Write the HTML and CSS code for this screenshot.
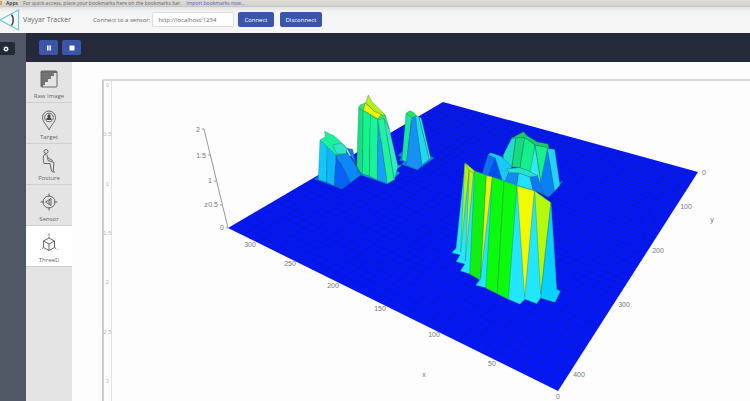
FILE: index.html
```
<!DOCTYPE html>
<html lang="en">
<head>
  <meta charset="utf-8" />
  <title>Vayyar Tracker</title>
  <link rel="stylesheet" href="styles.css">
</head>
<body>
  <div class="bookmarks">
    <span class="apps-icon"></span>
    <span class="apps">Apps</span>
    <span>For quick access, place your bookmarks here on the bookmarks bar.</span>
    <a href="#">Import bookmarks now...</a>
  </div>

  <header class="header">
    <svg class="logo" viewBox="0 0 20 22" fill="none">
      <path d="M18.500 1V21L0 11Z" stroke="#6fcbd6" stroke-width="1.200" />
      <path d="M11.500 5.500Q15 11 11.500 16.500" stroke="#3c4350" stroke-width="1.500" />
    </svg>
    <span class="title">Vayyar Tracker</span>
    <label for="sensor">Connect to a sensor:</label>
    <input id="sensor" class="sensor" type="text" value="http://localhost:1234">
    <button class="button" type="button">Connect</button>
    <button class="button" type="button">Disconnect</button>
  </header>

  <div class="app">
    <div class="rail">
      <button class="settings" type="button" aria-label="Settings">
        <svg viewBox="0 0 10 10" fill="none" stroke="#fff">
          <circle cx="5" cy="5" r="2" stroke-width="1.500" />
          <circle cx="5" cy="5" r="2.900" stroke-width="1" stroke-dasharray="1.200 1.080" />
        </svg>
      </button>
    </div>

    <div class="content">
      <div class="toolbar">
        <button class="button icon-button" type="button" aria-label="Pause">
          <svg viewBox="0 0 6 6" fill="#fff"><path d="M1 .5h1.600v5H1zM3.400 .5H5v5H3.400z" /></svg>
        </button>
        <button class="button icon-button" type="button" aria-label="Stop">
          <svg viewBox="0 0 6 6" fill="#fff"><path d="M.5 .5h5v5h-5z" /></svg>
        </button>
      </div>

      <div class="workspace">
        <nav class="views">
          <button class="view" type="button">
            <svg viewBox="0 0 24 24">
              <path fill="#666" stroke="none" d="M4 4H20V6H17V9H14V12H11V15H8V18H6V20H4Z" />
              <path stroke="#999" stroke-width=".4" d="M7 4V18M10 4V15M13 4V12M16 4V9M4 7H17M4 10H14M4 13H11M4 16H8" />
              <rect x="4" y="4" width="16" height="16" rx="1" />
            </svg>
            Raw Image
          </button>
          <button class="view" type="button">
            <svg viewBox="0 0 24 24">
              <path d="M12 22C10 17 5.500 14 5.500 9.500a6.500 6.500 0 0 1 13 0C18.500 14 14 17 12 22Z" />
              <circle cx="12" cy="9.500" r="4.300" />
              <path fill="#444" stroke="none" d="M9.300 12C9.300 10 10.600 9.600 11.200 9.300A1.600 1.600 0 1 1 12.800 9.300C13.400 9.600 14.700 10 14.700 12Z" />
            </svg>
            Target
          </button>
          <button class="view" type="button">
            <svg viewBox="0 0 24 24">
              <circle cx="9" cy="2.500" r="2" />
              <path d="M7.500 5.500C6 7 6 11 7 14.500H13L14.500 22L16 23L17 13.500L11 11.500L10.500 7Q9.500 5 7.500 5.500ZM10.500 8.500L15.500 11.500L15 12.500M16 23H18" />
            </svg>
            Posture
          </button>
          <button class="view" type="button">
            <svg viewBox="0 0 24 24">
              <circle cx="12" cy="12" r="6" />
              <path d="M12 3.500V7M12 17V20.500M3.500 12H7M17 12H20.500M8.500 12L14 8.500V15.500ZM12.500 10Q11 12 12.500 14" />
            </svg>
            Sensor
          </button>
          <button class="view active" type="button">
            <svg viewBox="0 0 24 24">
              <path d="M12 7L17.500 10V16.500L12 19.500L6.500 16.500V10ZM6.500 10L12 13L17.500 10M12 13V19.500" />
              <path d="M12 2.500V7M6.500 16.500L3.500 18.500M17.500 16.500L20.500 18.500" stroke-dasharray="2 1" />
            </svg>
            ThreeD
          </button>
        </nav>

        <main class="stage">
          <div class="panel">
            <div class="ruler">
              <span>0</span>
              <span>0.5</span>
              <span>1</span>
              <span>1.5</span>
              <span>2</span>
              <span>2.5</span>
              <span>3</span>
            </div>

            <svg class="plot" viewBox="112 81 638 320" preserveAspectRatio="xMinYMin meet">
              <polygon class="floor" points="228,228 443,102 698,172 558,391" />
              <path id="grid" class="grid" />

              <path class="axis" d="M204 129L228 228M202 129H204M208 155H210M214 181H216M220 205H222M226 228H228" />

              <!-- three peaks at the far left, model units are 1/3 px -->
              <g class="mesh" transform="translate(300 85) scale(.3333)">
                <!-- right one -->
                <polygon fill="#1478f5" points="304,202 294,212 304,216 298,226 312,230 304,238 352,255 404,218 386,212" />
                <polygon fill="#19e6a0" points="318,85 335,98 320,232 306,224" />
                <polygon fill="#1590f5" points="336,96 348,93 366,240 352,254 318,240" />
                <polygon fill="#23d8ee" points="346,92 357,95 388,223 366,240" />
                <polygon fill="#30eed8" points="357,95 364,100 392,220 388,223" />
                <polygon fill="#1ce65a" points="318,85 330,77 342,83 350,93 335,98" />
                <!-- middle one -->
                <polygon fill="#1896f5" points="284,240 306,240 288,256 300,264 262,297 176,268 172,250" />
                <polygon fill="#16df80" points="176,68 190,75 187,266 170,256" />
                <polygon fill="#12f58c" points="190,75 212,80 208,273 187,266" />
                <polygon fill="#18f596" points="212,80 234,100 232,284 208,273" />
                <polygon fill="#12a4fa" points="234,104 262,296 232,284" />
                <polygon fill="#20f3a0" points="234,104 252,98 283,284 262,296" />
                <polygon fill="#2fecc0" points="252,98 268,132 294,244 283,284" />
                <polygon fill="#2bea70" points="176,68 180,60 196,54 230,72 256,90 268,132 252,100 234,104 190,76" />
                <polygon fill="#f2f000" points="190,76 196,54 222,78 246,84 234,102" />
                <polygon fill="#b9ee14" points="197,54 205,30 216,50 250,84 256,94 222,78" />
                <!-- left one -->
                <polygon fill="#0a70f5" points="56,272 43,282 126,312 186,268" />
                <polygon fill="#12c8fb" points="60,165 82,178 80,292 55,284" />
                <polygon fill="#0cb6ff" points="82,178 108,208 103,302 80,292" />
                <polygon fill="#0860f5" points="108,208 152,292 128,310 103,302" />
                <polygon fill="#0c88fa" points="108,208 140,198 184,268 152,292" />
                <polygon fill="#0f7af0" points="140,190 158,193 174,264 184,268" />
                <polygon fill="#1cf09c" points="60,165 76,155 74,139 104,154 140,188 138,206 108,210 82,186" />
                <polygon fill="#2ee6c8" points="98,180 124,174 140,190 138,206 110,206" />
              </g>

              <!-- right hand side peaks -->
              <g class="mesh" transform="translate(440 120) scale(.3333)">
                <!-- back -->
                <polygon fill="#1878f5" points="300,190 354,188 369,184 326,231 296,216" />
                <polygon fill="#20dcc8" points="190,104 215,55 228,52 216,140 188,130" />
                <polygon fill="#14dc78" points="228,52 254,52 240,144 216,140" />
                <polygon fill="#14f08c" points="254,52 285,75 274,156 240,144" />
                <polygon fill="#30e8f0" points="285,75 304,192 296,206 270,158" />
                <polygon fill="#18f08c" points="285,75 326,82 304,192" />
                <polygon fill="#0a80f5" points="322,86 344,214 326,230 296,216" />
                <polygon fill="#20d4f5" points="322,86 344,88 360,196 344,214" />
                <polygon fill="#14d060" points="215,55 250,35 262,48 292,66 324,72 327,84 286,75 254,53 228,53" />
                <!-- middle -->
                <polygon fill="#0a70f5" points="144,104 166,114 190,185 126,164" />
                <polygon fill="#0050f0" points="166,114 188,184 142,170" />
                <polygon fill="#18c8fa" points="144,104 152,98 182,108 216,140 206,160 196,186 188,184 166,114" />
                <polygon fill="#1488f5" points="208,155 236,158 230,198 194,186" />
                <polygon fill="#20e2ff" points="236,158 270,170 280,212 230,198" />
                <polygon fill="#1078f5" points="270,170 292,166 312,222 280,212" />
                <polygon fill="#24e2d0" points="200,146 240,143 266,152 294,168 270,171 236,159 208,158" />
                <!-- front -->
                <polygon fill="#22e6ff" points="75,128 48,385 35,398 60,405 48,425 74,432 61,453 90,462 119,480 107,496 137,503 205,538 240,553 255,538 290,551 302,534 345,547 361,514 350,508 333,248 284,213 104,153" />
                <polygon fill="#b4f010" points="74,130 88,142 62,396" />
                <polygon fill="#c8f010" points="88,148 101,156 76,424" />
                <polygon fill="#b4f010" points="75,128 104,153 100,160 86,150" />
                <polygon fill="#12f012" points="104,153 139,167 121,479 89,462" />
                <polygon fill="#f2f200" points="139,167 157,171 122,472" />
                <polygon fill="#0cfa0c" points="157,171 192,184 172,521 137,504" />
                <polygon fill="#0cfa0c" points="192,184 231,198 205,538 172,521" />
                <polygon fill="#f2fa00" points="231,198 283,212 254,532" />
                <polygon fill="#b4fa0a" points="284,213 333,248 302,522" />
                <polygon fill="#08d2ff" points="333,248 350,508 361,514 345,547 302,534" />
              </g>

              <g class="ticks">
                <text x="198" y="132">2</text>
                <text x="201" y="158">1.5</text>
                <text x="210" y="183">1</text>
                <text x="213" y="207">0.5</text>
                <text x="206" y="207">z</text>
                <text x="222" y="230">0</text>
                <text x="250" y="247">300</text>
                <text x="290" y="266">250</text>
                <text x="333" y="288">200</text>
                <text x="380" y="311">150</text>
                <text x="434" y="337">100</text>
                <text x="492" y="366">50</text>
                <text x="558" y="399">0</text>
                <text x="424" y="377">x</text>
                <text x="704" y="175">0</text>
                <text x="686" y="209">100</text>
                <text x="658" y="253">200</text>
                <text x="624" y="307">300</text>
                <text x="579" y="377">400</text>
                <text x="712" y="222">y</text>
              </g>
            </svg>
          </div>
        </main>
      </div>
    </div>
  </div>
  <script src="grid.js"></script>
</body>
</html>
```
FILE: styles.css
```
* {
  box-sizing: border-box;
}

html, body {
  margin: 0;
  padding: 0;
}

body {
  display: flex;
  flex-direction: column;
  height: 100vh;
  overflow: hidden;
  background: #fdfdfd;
  color: #666;
  font-family: "Open Sans", sans-serif;
  font-size: 6px;
}

button, input {
  margin: 0;
  font: inherit;
}

button {
  padding: 0;
  border: 0;
  cursor: pointer;
}

.bookmarks {
  display: flex;
  flex: none;
  align-items: center;
  gap: 5px;
  height: 7px;
  background: linear-gradient(to bottom, #dedbd7, #d2d0cd);
  border-bottom: 1px solid #c6c6c6;
  font-size: 5px;
  line-height: 6px;
  white-space: nowrap;
}

.bookmarks a {
  color: #4a64b0;
  text-decoration: none;
}

.apps-icon {
  width: 2px;
  height: 4px;
  margin-right: -1px;
  background: #d9a441;
}

.apps {
  color: #333;
  font-weight: 600;
}

.header {
  display: flex;
  flex: none;
  align-items: center;
  height: 26px;
  padding-bottom: 1px;
  background: linear-gradient(to bottom, #e2e2e2, #f5f5f5 5px, #f5f5f5);
}

.logo {
  width: 20px;
  height: 22px;
}

.title {
  margin: 0 22px 0 3px;
  font-size: 7px;
}

.sensor {
  width: 82px;
  height: 15px;
  margin: 0 4px 0 2px;
  padding: 0 5px;
  border: 1px solid #ddd;
  border-radius: 1px;
  background: #fff;
  color: #666;
}

.button {
  height: 15px;
  padding: 0 6px;
  border-radius: 2px;
  background: #3b55a9;
  color: #fff;
}

.button + .button {
  margin-left: 6px;
}

.app {
  display: flex;
  flex: 1;
  min-height: 0;
}

.rail {
  flex: none;
  width: 26px;
  padding-top: 9px;
  background: #505866;
}

.settings {
  display: flex;
  align-items: center;
  justify-content: center;
  width: 15px;
  height: 13px;
  padding-right: 3px;
  border-radius: 0 2px 2px 0;
  background: #222939;
}

.settings svg {
  width: 8px;
  height: 8px;
}

.content {
  display: flex;
  flex: 1;
  flex-direction: column;
  min-width: 0;
}

.toolbar {
  display: flex;
  flex: none;
  align-items: center;
  height: 29px;
  padding: 0 13px;
  background: #242a3a;
}

.icon-button {
  display: flex;
  align-items: center;
  justify-content: center;
  width: 19px;
  padding: 0;
}

.toolbar .icon-button + .icon-button {
  margin-left: 4px;
}

.icon-button svg {
  width: 6px;
  height: 6px;
}

.workspace {
  display: flex;
  flex: 1;
  min-height: 0;
}

.views {
  flex: none;
  width: 46px;
  background: #e4e4e4;
}

.view {
  display: flex;
  flex-direction: column;
  align-items: center;
  justify-content: flex-end;
  gap: 1px;
  width: 100%;
  height: 41px;
  padding-bottom: 2px;
  border-bottom: 1px solid #cfcfcf;
  background: #e4e4e4;
  color: #666;
  line-height: 8px;
}

.view.active {
  background: #fff;
}

.view svg {
  width: 24px;
  height: 24px;
  overflow: visible;
  fill: none;
  stroke: #666;
  stroke-width: 1;
}

.stage {
  display: flex;
  flex: 1;
  min-width: 0;
  padding: 17px 0 0 30px;
}

.panel {
  display: flex;
  flex: 1;
  min-width: 0;
  border-top: 2px solid #d8d8d8;
  border-left: 2px solid #ccc;
  border-top-left-radius: 2px;
}

.ruler {
  display: flex;
  flex: none;
  flex-direction: column;
  align-items: center;
  justify-content: space-between;
  width: 8px;
  padding-bottom: 16px;
  border-right: 1px solid #e2e2e2;
  color: #bbb;
  font-family: "Liberation Sans", sans-serif;
  line-height: 8px;
}

.plot {
  flex: 1;
  min-width: 0;
  align-self: flex-start;
}

.floor {
  fill: #0418f5;
}

.grid {
  fill: none;
  stroke: #1a1f6c;
  stroke-width: .5;
  opacity: .6;
}

.axis {
  fill: none;
  stroke: #999;
  stroke-width: 1;
}

.mesh {
  stroke: #1f6a5c;
  stroke-width: 1;
  stroke-linejoin: round;
}

.ticks {
  fill: #777;
  font-family: "Liberation Sans", sans-serif;
  font-size: 7px;
  text-anchor: middle;
}
```
FILE: grid.js
```
// floor corners: (x max, y 0), (0, 0), (0, y max), (x max, y max)
var far = [443, 102];
var right = [698, 172];
var near = [558, 391];
var left = [228, 228];

// projective map from the unit square to the floor
var dx1 = right[0] - near[0], dx2 = left[0] - near[0];
var dy1 = right[1] - near[1], dy2 = left[1] - near[1];
var sx = far[0] - right[0] + near[0] - left[0];
var sy = far[1] - right[1] + near[1] - left[1];
var det = dx1 * dy2 - dx2 * dy1;
var g = (sx * dy2 - dx2 * sy) / det;
var h = (dx1 * sy - sx * dy1) / det;

function project(u, v) {
  var w = g * u + h * v + 1;
  var x = (right[0] - far[0] + g * right[0]) * u + (left[0] - far[0] + h * left[0]) * v + far[0];
  var y = (right[1] - far[1] + g * right[1]) * u + (left[1] - far[1] + h * left[1]) * v + far[1];
  return (x / w).toFixed(2) + ' ' + (y / w).toFixed(2);
}

var d = '';
for (var i = 1; i < 34; i++) {
  d += 'M' + project(i / 34, 0) + 'L' + project(i / 34, 1);
}
for (var j = 1; j < 44; j++) {
  d += 'M' + project(0, j / 44) + 'L' + project(1, j / 44);
}
document.getElementById('grid').setAttribute('d', d);
```
